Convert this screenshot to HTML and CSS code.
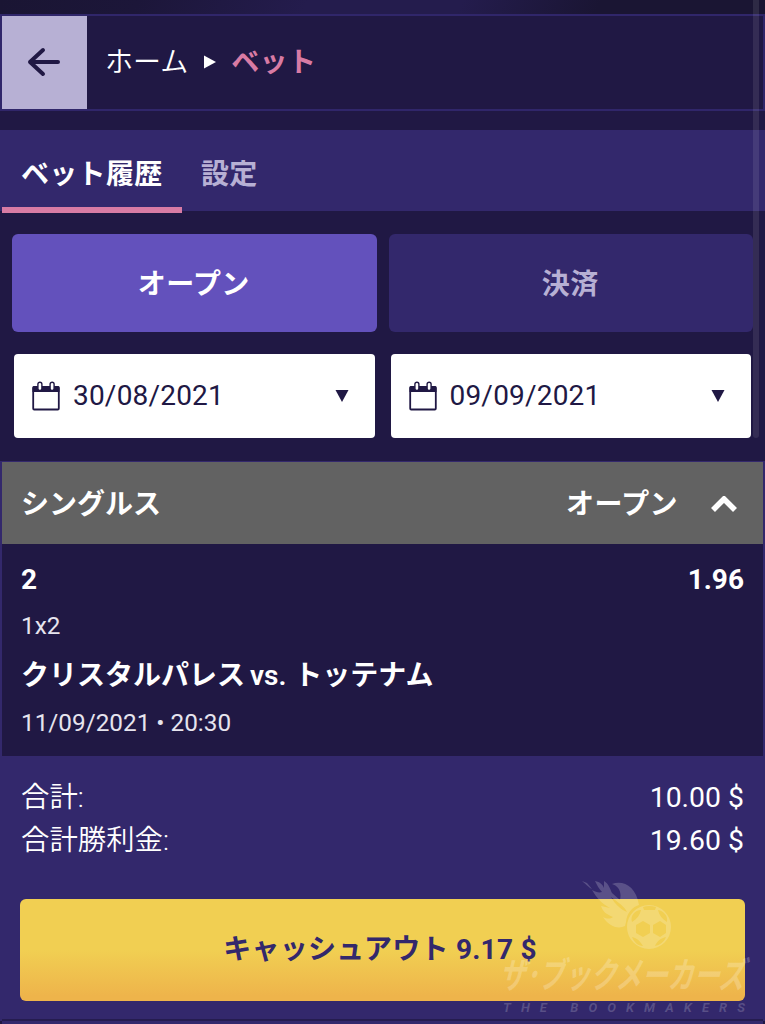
FILE: index.html
```html
<!DOCTYPE html>
<html lang="ja">
<head>
  <meta charset="UTF-8">
  <title>ベット履歴</title>
  <link rel="stylesheet" href="styles.css">
</head>
<body>

  <div class="app">
    <div class="top-strip"></div>

    <!-- Breadcrumb -->
    <header class="breadcrumb">
      <button class="back">
        <svg width="34" height="30" viewBox="0 0 34 30"><path d="M31 15H3M16 3 3 15l13 12" fill="none" stroke="#201844" stroke-width="4" stroke-linecap="round" stroke-linejoin="round"/></svg>
      </button>
      <nav class="crumbs">
        <span>ホーム</span>
        <svg class="crumb-arrow" width="12" height="14" viewBox="0 0 12 14"><path d="M0 0.5v13L12 7z" fill="#fff"/></svg>
        <span class="current">ベット</span>
      </nav>
    </header>

    <!-- Tabs -->
    <div class="tabs">
      <div class="tab active">ベット履歴</div>
      <div class="tab">設定</div>
    </div>

    <!-- Filters -->
    <div class="status-filter">
      <button class="status selected">オープン</button>
      <button class="status">決済</button>
    </div>
    <div class="date-filter">
      <div class="date">
        <svg class="calendar" width="28" height="30" viewBox="0 0 28 30"><path d="M2 5h24a1.5 1.5 0 0 1 1.5 1.5V11H.5V6.500A1.5 1.5 0 0 1 2 5z" fill="#201844"/><rect x="1.200" y="6" width="25.600" height="22.500" rx="1" fill="none" stroke="#201844" stroke-width="1.800"/><rect x="5.900" y="1.200" width="4" height="8.300" rx="2" fill="#fff" stroke="#201844" stroke-width="1.400"/><rect x="18.100" y="1.200" width="4" height="8.300" rx="2" fill="#fff" stroke="#201844" stroke-width="1.400"/></svg>
        <span>30/08/2021</span>
        <svg class="caret" width="14" height="12" viewBox="0 0 14 12"><path d="M0.500 0h13L7 12z" fill="#201844"/></svg>
      </div>
      <div class="date">
        <svg class="calendar" width="28" height="30" viewBox="0 0 28 30"><path d="M2 5h24a1.5 1.5 0 0 1 1.5 1.5V11H.5V6.500A1.5 1.5 0 0 1 2 5z" fill="#201844"/><rect x="1.200" y="6" width="25.600" height="22.500" rx="1" fill="none" stroke="#201844" stroke-width="1.800"/><rect x="5.900" y="1.200" width="4" height="8.300" rx="2" fill="#fff" stroke="#201844" stroke-width="1.400"/><rect x="18.100" y="1.200" width="4" height="8.300" rx="2" fill="#fff" stroke="#201844" stroke-width="1.400"/></svg>
        <span>09/09/2021</span>
        <svg class="caret" width="14" height="12" viewBox="0 0 14 12"><path d="M0.500 0h13L7 12z" fill="#201844"/></svg>
      </div>
    </div>

    <!-- Bet -->
    <section class="bet">
      <div class="bet-head">
        <span>シングルス</span>
        <span class="bet-state">オープン</span>
        <svg width="26" height="18" viewBox="0 0 26 18"><path d="M2 14 13 3l11 11" fill="none" stroke="#fff" stroke-width="5.600"/></svg>
      </div>
      <div class="bet-body">
        <div class="row pick"><span>2</span><span>1.96</span></div>
        <div class="market">1x2</div>
        <div class="match">クリスタルパレス <span class="vs">vs.</span> トッテナム</div>
        <div class="kickoff">11/09/2021 • 20:30</div>
      </div>
      <div class="bet-foot">
        <div class="row total"><span>合計:</span><span>10.00 $</span></div>
        <div class="row total"><span>合計勝利金:</span><span>19.60 $</span></div>
        <button class="cashout">キャッシュアウト 9.17 $</button>
      </div>
    </section>

    <div class="scrollbar"></div>

    <!-- Watermark -->
    <svg class="watermark" width="265" height="144" viewBox="0 0 265 144">
      <g fill="#fff" opacity="0.19">
        <path d="M82 1l5 2 5 6-2-1z"/>
        <path fill-rule="evenodd" d="M95 1c5 1 8 4 9 7l0-7c5 3 6 8 8 12l8 7c2-9-2-14-8-16 11-4 24 2 27 21-7 2-12 8-13 17l-1 4c-8 4-17-1-22-9 4 2 7 2 10 0-7-3-10-5-12-11l9 2c-8-4-14-11-18-18 4 2 7 3 10 2-3-3-5-7-7-11zM111 17c4 7 9 12 16 15-2-5-9-10-16-15z"/>
        <path fill-rule="evenodd" d="M149 25a22 22 0 1 0 0 44 22 22 0 0 0 0-44zm-6 2q6-2 13 0l-1 3h-11zM141 30c-1 5-4 9-9 12-2-6 3-12 9-12zM158 30c6 1 10 6 9 12-5-3-8-7-9-12zM143 41l7 4v8l-7 4-7-4v-8zM160 41l6 4v8l-6 4-7-4v-8zM132 57c5 1 8 4 11 9-5 0-9-4-11-9zM166 57c-2 5-6 8-11 9 2-5 6-8 11-9z"/>
      </g>
      <text class="wm-title" transform="translate(-1 108) skewX(-14)" textLength="245" lengthAdjust="spacingAndGlyphs">ザ･ブックメーカーズ</text>
      <text class="wm-sub" x="3" y="132" textLength="242">THE BOOKMAKERS</text>
    </svg>
  </div>

</body>
</html>
```
FILE: styles.css
```css
* {
  box-sizing: border-box;
}

body {
  margin: 0;
  background: #201844;
  color: #fff;
  font-family: Roboto, "Noto Sans CJK JP", sans-serif;
  font-size: 28px;
  line-height: 32px;
}

button {
  border: none;
  padding: 0;
  font: inherit;
  color: inherit;
}

svg {
  flex: none;
}

.app {
  position: relative;
  height: 1024px;
  overflow: hidden;
}

.top-strip {
  height: 14px;
  background: linear-gradient(115deg, #1a1533 0%, #1c1639 18%, #241c4d 40%, #241c4d 60%, #1a1533 78%, #1a1533 100%);
}

/* Breadcrumb */
.breadcrumb {
  display: flex;
  height: 97px;
  margin-bottom: 19px;
  border: 2px solid #30266a;
}

.back {
  display: flex;
  align-items: center;
  justify-content: center;
  width: 85px;
  padding: 0 1px 2px 0;
  background: #b7b0d4;
}

.crumbs {
  display: flex;
  align-items: center;
  padding: 1px 0 0 18px;
  font-weight: 350;
}

.crumb-arrow {
  margin: 0 15px 2px 16px;
}

.current {
  color: #d87ba4;
  font-weight: 700;
  letter-spacing: 0.4px;
}

/* Tabs */
.tabs {
  display: flex;
  height: 81px;
  padding-left: 2px;
  margin-bottom: 23px;
  background: #33286c;
  font-weight: 700;
  letter-spacing: 0.3px;
}

.tab {
  height: 83px;
  padding: 29px 19px 0;
  color: #b7b0d4;
}

.active {
  width: 180px;
  color: #fff;
  border-bottom: 6px solid #d87ba4;
}

/* Filters */
.status-filter {
  display: flex;
  gap: 12px;
  padding: 0 12px;
  margin-bottom: 22px;
}

.status {
  flex: 1;
  height: 98px;
  padding: 3px 1px 0 0;
  border-radius: 6px;
  background: #33286c;
  color: #b7b0d4;
  font-weight: 700;
  letter-spacing: 0.4px;
}

.selected {
  background: #6351bc;
  color: #fff;
}

.date-filter {
  display: flex;
  gap: 16px;
  padding: 0 14px;
  margin-bottom: 23px;
}

.date {
  display: flex;
  flex: 1;
  align-items: center;
  height: 84px;
  padding: 0 26px 0 18px;
  border-radius: 4px;
  background: #fff;
  color: #201844;
  letter-spacing: 0.2px;
}

.calendar {
  margin-right: 13px;
}

.caret {
  margin-left: auto;
}

/* Bet */
.bet {
  height: 560px;
  border: 1px solid #33286c;
  border-width: 1px 2px 0;
}

.bet-head {
  display: flex;
  align-items: center;
  height: 82px;
  padding: 4px 26px 0 19px;
  background: #626262;
  font-weight: 700;
}

.bet-state {
  margin: 0 33px 0 auto;
  letter-spacing: 0.4px;
}

.row {
  display: flex;
  justify-content: space-between;
}

.bet-body {
  height: 212px;
  padding: 20px 19px 0 19px;
}

.pick,
.match {
  font-weight: 700;
}

.market,
.kickoff {
  color: #e6e4ee;
  font-size: 24.3px;
}

.market {
  margin: 14px 0 18px;
}

.match {
  margin-bottom: 15px;
}

.vs {
  margin: 0 1px 0 -2px;
  font-weight: 600;
}

.bet-foot {
  height: 263px;
  padding: 20px 18px 0 18px;
  border-bottom: 0;
  background: #33286c;
  box-shadow: 0 2px #251c4f, 0 8px #33286c;
}

.total {
  padding: 0 1px;
  line-height: 43px;
  font-size: 28.4px;
  font-weight: 350;
}

.total span:last-child {
  font-weight: 400;
}

.cashout {
  width: 100%;
  height: 102px;
  padding-right: 5px;
  margin-top: 37px;
  border-radius: 6px;
  background: linear-gradient(#f1cf52 50%, #eeb44b 95%);
  color: #33286c;
  font-weight: 700;
  letter-spacing: 0.25px;
}

.scrollbar {
  position: absolute;
  top: 0;
  left: 753px;
  width: 6px;
  height: 438px;
  border-radius: 0 0 3px 3px;
  background: rgba(255, 255, 255, 0.09);
}

.watermark {
  position: absolute;
  left: 500px;
  top: 880px;
  overflow: visible;
}

.wm-title {
  font-family: "Noto Sans CJK JP", sans-serif;
  font-size: 36px;
  font-weight: 700;
  fill: rgba(255, 255, 255, 0.22);
}

.wm-sub {
  font-size: 13px;
  font-weight: 700;
  font-style: italic;
  fill: rgba(255, 255, 255, 0.19);
}
```
